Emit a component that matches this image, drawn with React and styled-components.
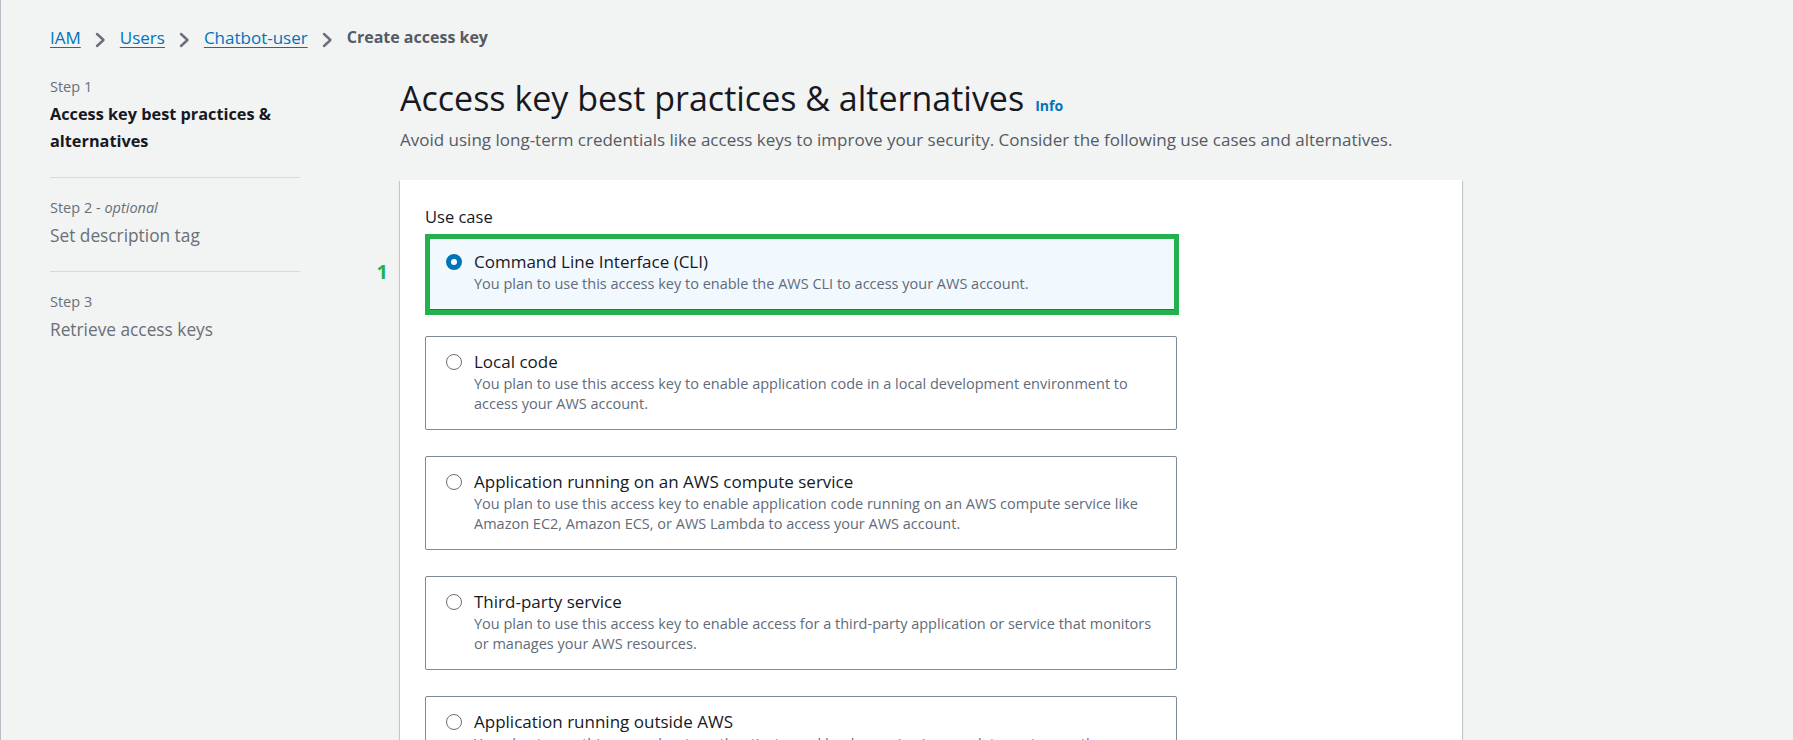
import React from "react";
import styled, { createGlobalStyle } from "styled-components";

const GlobalStyle = createGlobalStyle`
  html, body { margin: 0; padding: 0; overflow: hidden; }
  body {
    background: #f2f3f3;
    font-family: "Open Sans", "Noto Sans", "Liberation Sans", sans-serif;
    color: #16191f;
  }
  * { box-sizing: border-box; }
`;

const Page = styled.div`
  min-height: 100vh;
  border-left: 1px solid #b8bec4;
  padding: 25px 0 0 49px;
`;

const Breadcrumbs = styled.nav`
  display: flex;
  align-items: center;
  gap: 14px;
  height: 25px;
  font-size: 17px;
  line-height: 25px;
`;

const Crumb = styled.a`
  color: #0073bb;
  text-decoration: underline;
  text-underline-offset: 3px;
  text-decoration-thickness: 1px;
  cursor: pointer;
`;

const CurrentCrumb = styled.span`
  font-size: 16px;
  font-weight: 700;
  color: #545b64;
`;

const ChevronSvg = styled.svg`
  flex: none;
  margin-top: 4px;
`;

const Chevron = () => (
  <ChevronSvg width="11" height="16" viewBox="0 0 11 16" aria-hidden="true">
    <polyline
      points="2,2 8.5,8 2,14"
      fill="none"
      stroke="#687078"
      strokeWidth="2.4"
      strokeLinecap="round"
      strokeLinejoin="round"
    />
  </ChevronSvg>
);

const Layout = styled.div`
  display: grid;
  grid-template-columns: 250px 1062px;
  column-gap: 100px;
  margin-top: 27px;
  align-items: start;
`;

const Steps = styled.ol`
  list-style: none;
  margin: 0;
  padding: 0;
`;

const StepItem = styled.li`
  padding: 20px 0 22px;
  border-bottom: 1px solid #d5dbdb;
  &:first-child { padding-top: 0; }
  &:last-child { border-bottom: none; }
`;

const StepLabel = styled.div`
  font-size: 14.5px;
  line-height: 20px;
  color: #687078;
  em { font-style: italic; }
`;

const StepTitle = styled.div`
  margin-top: 4px;
  font-size: ${(p) => (p.$active ? "16.3px" : "17.3px")};
  line-height: 27px;
  font-weight: ${(p) => (p.$active ? 700 : 400)};
  color: ${(p) => (p.$active ? "#16191f" : "#687078")};
`;

const Main = styled.main`
  min-width: 0;
`;

const TitleRow = styled.div`
  display: flex;
  align-items: baseline;
  gap: 11px;
`;

const Title = styled.h1`
  margin: 0;
  font-size: 34px;
  line-height: 42px;
  font-weight: 400;
  color: #16191f;
`;

const InfoLink = styled.a`
  font-size: 14px;
  font-weight: 700;
  color: #0073bb;
  text-decoration: none;
`;

const Subtitle = styled.p`
  margin: 8px 0 0;
  font-size: 17px;
  line-height: 25px;
  color: #545b64;
`;

const Card = styled.section`
  margin-top: 28px;
  background: #ffffff;
  padding: 25px 25px 40px;
  box-shadow: 0 1px 1px 0 rgba(0, 28, 36, 0.3),
    1px 1px 1px 0 rgba(0, 28, 36, 0.15),
    -1px 1px 1px 0 rgba(0, 28, 36, 0.15);
`;

const FieldLabel = styled.div`
  font-size: 16.5px;
  line-height: 24px;
  color: #16191f;
`;

const OptionList = styled.div`
  margin-top: 7px;
  width: 752px;
  display: flex;
  flex-direction: column;
  gap: 26px;
`;

const OptionTile = styled.label`
  position: relative;
  display: flex;
  gap: 12px;
  padding: 12px 12px 15px 20px;
  border: 1px solid ${(p) => (p.$selected ? "#0073bb" : "#7d8998")};
  border-radius: 2px;
  background: ${(p) => (p.$selected ? "#f1f8fe" : "#ffffff")};
`;

const Radio = styled.span`
  flex: none;
  width: 16px;
  height: 16px;
  margin-top: 4.5px;
  border-radius: 50%;
  background: #ffffff;
  border: ${(p) => (p.$checked ? "5px solid #0073bb" : "1.5px solid #687078")};
`;

const OptionText = styled.div`
  display: flex;
  flex-direction: column;
`;

const OptionTitle = styled.span`
  font-size: 17px;
  line-height: 25px;
  color: #16191f;
`;

const OptionDesc = styled.span`
  font-size: 14.5px;
  line-height: 20px;
  color: #5f6b7a;
`;

const Highlight = styled.span`
  position: absolute;
  top: -3px;
  left: -1px;
  right: -3px;
  bottom: -6px;
  border: 5px solid #22b14c;
  pointer-events: none;
`;

const Marker = styled.span`
  position: absolute;
  right: calc(100% + 38px);
  top: 25px;
  font-size: 20px;
  line-height: 1;
  font-weight: 700;
  color: #22b14c;
`;

const steps = [
  { label: "Step 1", title: "Access key best practices & alternatives", active: true },
  { label: "Step 2", optional: true, title: "Set description tag" },
  { label: "Step 3", title: "Retrieve access keys" },
];

const options = [
  {
    title: "Command Line Interface (CLI)",
    desc: "You plan to use this access key to enable the AWS CLI to access your AWS account.",
    selected: true,
  },
  {
    title: "Local code",
    desc: "You plan to use this access key to enable application code in a local development environment to access your AWS account.",
  },
  {
    title: "Application running on an AWS compute service",
    desc: "You plan to use this access key to enable application code running on an AWS compute service like Amazon EC2, Amazon ECS, or AWS Lambda to access your AWS account.",
  },
  {
    title: "Third-party service",
    desc: "You plan to use this access key to enable access for a third-party application or service that monitors or manages your AWS resources.",
  },
  {
    title: "Application running outside AWS",
    desc: "You plan to use this access key to authenticate workloads running in your data center or other infrastructure outside of AWS that needs to access your AWS resources.",
  },
];

export default function App() {
  return (
    <>
      <GlobalStyle />
      <Page>
        <Breadcrumbs>
          <Crumb>IAM</Crumb>
          <Chevron />
          <Crumb>Users</Crumb>
          <Chevron />
          <Crumb>Chatbot-user</Crumb>
          <Chevron />
          <CurrentCrumb>Create access key</CurrentCrumb>
        </Breadcrumbs>
        <Layout>
          <Steps>
            {steps.map((s) => (
              <StepItem key={s.label}>
                <StepLabel>
                  {s.label}
                  {s.optional && (
                    <>
                      {" - "}
                      <em>optional</em>
                    </>
                  )}
                </StepLabel>
                <StepTitle $active={s.active}>{s.title}</StepTitle>
              </StepItem>
            ))}
          </Steps>
          <Main>
            <TitleRow>
              <Title>Access key best practices &amp; alternatives</Title>
              <InfoLink>Info</InfoLink>
            </TitleRow>
            <Subtitle>
              Avoid using long-term credentials like access keys to improve your security. Consider the
              following use cases and alternatives.
            </Subtitle>
            <Card>
              <FieldLabel>Use case</FieldLabel>
              <OptionList>
                {options.map((o) => (
                  <OptionTile key={o.title} $selected={o.selected}>
                    <Radio $checked={o.selected} />
                    <OptionText>
                      <OptionTitle>{o.title}</OptionTitle>
                      <OptionDesc>{o.desc}</OptionDesc>
                    </OptionText>
                    {o.selected && (
                      <>
                        <Highlight />
                        <Marker>1</Marker>
                      </>
                    )}
                  </OptionTile>
                ))}
              </OptionList>
            </Card>
          </Main>
        </Layout>
      </Page>
    </>
  );
}
